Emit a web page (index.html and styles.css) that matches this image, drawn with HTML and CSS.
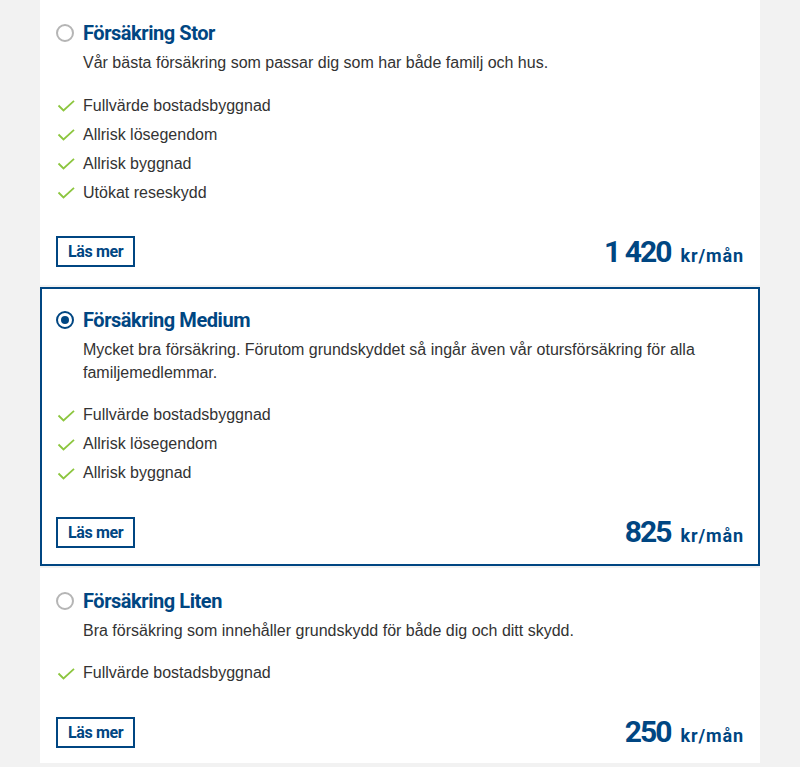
FILE: index.html
```html
<!DOCTYPE html>
<html lang="sv">
<head>
<meta charset="utf-8">
<title>Försäkringar</title>
<link rel="stylesheet" href="styles.css">
</head>
<body>
<main class="plans">
  <section class="card">
    <div class="card-head">
      <span class="radio"></span>
      <h2 class="title">Försäkring Stor</h2>
    </div>
    <p class="desc">Vår bästa försäkring som passar dig som har både familj och hus.</p>
    <ul class="features">
      <li><svg class="check" viewBox="0 0 18 12" width="18" height="12"><polyline points="1.5,5.5 6.5,10.5 17,0.8"/></svg>Fullvärde bostadsbyggnad</li>
      <li><svg class="check" viewBox="0 0 18 12" width="18" height="12"><polyline points="1.5,5.5 6.5,10.5 17,0.8"/></svg>Allrisk lösegendom</li>
      <li><svg class="check" viewBox="0 0 18 12" width="18" height="12"><polyline points="1.5,5.5 6.5,10.5 17,0.8"/></svg>Allrisk byggnad</li>
      <li><svg class="check" viewBox="0 0 18 12" width="18" height="12"><polyline points="1.5,5.5 6.5,10.5 17,0.8"/></svg>Utökat reseskydd</li>
    </ul>
    <div class="card-foot">
      <a class="more" href="#">Läs mer</a>
      <div class="price"><span class="amount">1 420</span><span class="unit">kr/mån</span></div>
    </div>
  </section>

  <section class="card selected">
    <div class="card-head">
      <span class="radio checked"></span>
      <h2 class="title">Försäkring Medium</h2>
    </div>
    <p class="desc">Mycket bra försäkring. Förutom grundskyddet så ingår även vår otursförsäkring för alla familjemedlemmar.</p>
    <ul class="features">
      <li><svg class="check" viewBox="0 0 18 12" width="18" height="12"><polyline points="1.5,5.5 6.5,10.5 17,0.8"/></svg>Fullvärde bostadsbyggnad</li>
      <li><svg class="check" viewBox="0 0 18 12" width="18" height="12"><polyline points="1.5,5.5 6.5,10.5 17,0.8"/></svg>Allrisk lösegendom</li>
      <li><svg class="check" viewBox="0 0 18 12" width="18" height="12"><polyline points="1.5,5.5 6.5,10.5 17,0.8"/></svg>Allrisk byggnad</li>
    </ul>
    <div class="card-foot">
      <a class="more" href="#">Läs mer</a>
      <div class="price"><span class="amount">825</span><span class="unit">kr/mån</span></div>
    </div>
  </section>

  <section class="card">
    <div class="card-head">
      <span class="radio"></span>
      <h2 class="title">Försäkring Liten</h2>
    </div>
    <p class="desc">Bra försäkring som innehåller grundskydd för både dig och ditt skydd.</p>
    <ul class="features">
      <li><svg class="check" viewBox="0 0 18 12" width="18" height="12"><polyline points="1.5,5.5 6.5,10.5 17,0.8"/></svg>Fullvärde bostadsbyggnad</li>
    </ul>
    <div class="card-foot">
      <a class="more" href="#">Läs mer</a>
      <div class="price"><span class="amount">250</span><span class="unit">kr/mån</span></div>
    </div>
  </section>
</main>
</body>
</html>
```

FILE: styles.css
```css
html, body {
  margin: 0;
  padding: 0;
  background: #f2f2f2;
}

body {
  font-family: "Liberation Sans", Arial, sans-serif;
  color: #333333;
}

.plans {
  width: 720px;
  margin: 0 auto;
  display: flex;
  flex-direction: column;
  gap: 2px;
}

.card {
  background: #ffffff;
  border: 2px solid #ffffff;
  padding: 17px 14px 16px 14px;
}

.card:last-child {
  padding-bottom: 13px;
}

.card.selected {
  border-color: #004682;
}

.card-head {
  display: flex;
  align-items: center;
  gap: 9px;
  height: 28px;
}

.radio {
  box-sizing: border-box;
  width: 18px;
  height: 18px;
  border-radius: 50%;
  border: 2px solid #b5b5b5;
  background: #ffffff;
  display: flex;
  align-items: center;
  justify-content: center;
  flex: none;
}

.radio.checked {
  border-color: #004682;
}

.radio.checked::after {
  content: "";
  width: 8px;
  height: 8px;
  border-radius: 50%;
  background: #004682;
}

.title {
  margin: 0;
  font-family: Roboto, "Liberation Sans", sans-serif;
  font-weight: 700;
  font-size: 20px;
  letter-spacing: -0.45px;
  line-height: 28px;
  color: #004682;
}

.desc {
  margin: 5px 0 0 27px;
  font-size: 16px;
  line-height: 22.5px;
  color: #333333;
}

.features {
  list-style: none;
  margin: 16px 0 0 0;
  padding: 0 0 0 1px;
}

.features li {
  display: flex;
  align-items: center;
  gap: 8px;
  height: 29px;
  font-size: 16px;
  line-height: 29px;
  color: #333333;
}

.check {
  flex: none;
  fill: none;
  stroke: #8cc63f;
  stroke-width: 1.8;
  margin-top: 2px;
}

.card-foot {
  margin-top: 29.5px;
  display: flex;
  align-items: center;
  justify-content: space-between;
  height: 31px;
}

.more {
  box-sizing: border-box;
  height: 31px;
  padding: 0 10px;
  border: 2px solid #004682;
  font-family: Roboto, "Liberation Sans", sans-serif;
  font-weight: 700;
  font-size: 16px;
  letter-spacing: -0.35px;
  line-height: 27px;
  color: #004682;
  text-decoration: none;
}

.price {
  display: flex;
  align-items: baseline;
  gap: 10px;
  padding-top: 3px;
  color: #004682;
  font-family: Roboto, "Liberation Sans", sans-serif;
  font-weight: 700;
  line-height: 31px;
}

.amount {
  font-size: 30px;
  letter-spacing: -2px;
}

.unit {
  font-size: 18px;
  letter-spacing: 0.9px;
}
```
